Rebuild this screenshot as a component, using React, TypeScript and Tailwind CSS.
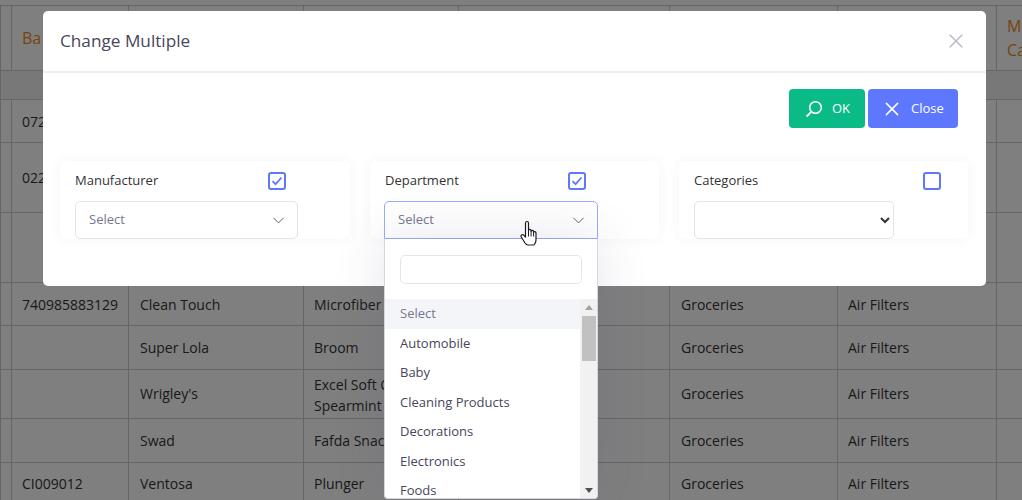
import React from 'react';
import { ChevronDown, X } from 'lucide-react';

const rows = [
  { h: 'h-[43px]', a: '072', b: '', c: '', pad: '', cc: '' },
  { h: 'h-[70px]', a: '022', b: '', c: '', pad: '', cc: '' },
  { h: 'h-[70px]', a: '', b: '', c: '', pad: '', cc: '' },
  { h: 'h-[43px]', a: '740985883129', b: 'Clean Touch', c: 'Microfiber', pad: '', cc: '' },
  { h: 'h-[44px]', a: '', b: 'Super Lola', c: 'Broom', pad: '', cc: '' },
  { h: 'h-[49px]', a: '', b: "Wrigley's", c: 'Excel Soft C Spearmint', pad: 'pb-[2px]', cc: 'pt-[2px]' },
  { h: 'h-[44px]', a: '', b: 'Swad', c: 'Fafda Snac', pad: '', cc: '' },
  { h: 'h-[42px]', a: 'CI009012', b: 'Ventosa', c: 'Plunger', pad: '', cc: '' },
];

const options = ['Automobile', 'Baby', 'Cleaning Products', 'Decorations', 'Electronics', 'Foods'];

function Check({ checked }: { checked: boolean }) {
  return (
    <span className="flex h-[18px] w-[18px] items-center justify-center rounded-[3px] border-2 border-[#5d78ff] bg-white">
      {checked && (
        <svg width="12" height="10" viewBox="0 0 12 10" fill="none">
          <path d="M1.5 5.2 4.6 8.2 10.5 1.5" stroke="#5d78ff" strokeWidth="1.8" />
        </svg>
      )}
    </span>
  );
}

function FakeSelect({ open }: { open?: boolean }) {
  return (
    <div className={`flex h-[38px] items-center justify-between rounded-[5px] border pl-[13px] text-[13px] text-[#74788d] ${open ? 'w-[214px] rounded-b-none border-[#9aabff] pr-[9px]' : 'w-[223px] border-[#e2e5ec] pr-[9px]'}`}>
      <span>Select</span>
      <ChevronDown size={19} strokeWidth={1.25} className="text-[#595d6e]" />
    </div>
  );
}

function HandCursor() {
  return (
    <svg className="absolute left-[520px] top-[220px]" width="20" height="27" viewBox="0 0 20 27">
      <path
        d="M5.5 3c0-2 3-2 3 0v7.5c0-1.5 2.6-1.5 2.6 0v1c0-1.4 2.5-1.4 2.5 0v1c0-1.3 2.4-1.3 2.4.2v7c0 2.6-1.6 5.3-2.4 5.3H8c-1.5 0-2.2-.8-3-2L1.3 17c-1-1.8 1-3.3 2.4-1.8l1.8 2z"
        fill="#fff"
        stroke="#1b1b28"
        strokeWidth="1.2"
        strokeLinejoin="round"
      />
      <path d="M8.5 11v5.5M11.1 11.5v5M13.6 12.5v4" stroke="#1b1b28" strokeWidth="1" fill="none" />
    </svg>
  );
}

function Dropdown() {
  return (
    <div className="absolute left-[384px] top-[239px] h-[260px] w-[214px] overflow-hidden rounded-b-[4px] border border-t-0 border-[#d5d5dc] bg-white shadow-[0_0_50px_0_rgba(82,63,105,0.15)]">
      <div className="flex h-[60px] items-start px-[15px] pt-[16px]">
        <div className="h-[29px] w-full rounded-[5px] border border-[#e2e5ec]" />
      </div>
      <div className="flex">
        <div className="w-[196px] text-[13px] text-[#48465b]">
          <div className="flex h-[29.6px] items-center bg-[#f4f5f8] pl-[15px] text-[#74788d]">Select</div>
          {options.map((o) => (
            <div key={o} className="flex h-[29.5px] items-center pl-[15px]">{o}</div>
          ))}
        </div>
        <div className="flex h-[200px] w-[17px] flex-col items-center justify-between bg-[#f1f1f1] py-[6px]">
          <svg width="8" height="5" viewBox="0 0 8 5"><path d="M4 0 8 5H0z" fill="#a3a3a3" /></svg>
          <svg width="8" height="5" viewBox="0 0 8 5"><path d="M4 5 8 0H0z" fill="#505050" /></svg>
        </div>
      </div>
      <div className="absolute left-[197px] top-[77px] h-[45px] w-[14px] bg-[#c1c1c1]" />
    </div>
  );
}

export default function App() {
  return (
    <div className="relative h-[500px] w-[1022px] overflow-hidden bg-white font-['Open_Sans',sans-serif] text-[14px] text-[#333]">
      {/* Table behind the modal */}
      <div className="pt-[5px]">
        <table className="w-[1100px] table-fixed border-collapse">
          <colgroup>
            <col className="w-[11px]" />
            <col className="w-[117px]" />
            <col className="w-[175px]" />
            <col className="w-[155px]" />
            <col className="w-[211px]" />
            <col className="w-[168px]" />
            <col className="w-[159px]" />
            <col className="w-[104px]" />
          </colgroup>
          <thead>
            <tr className="h-[65px] text-left text-[16px] leading-[24px] text-[#e88a20]">
              <th className="border border-[#ccc]" />
              <th className="border border-[#ccc] px-[10px] font-normal">Ba</th>
              <th className="border border-[#ccc]" />
              <th className="border border-[#ccc]" />
              <th className="border border-[#ccc]" />
              <th className="border border-[#ccc]" />
              <th className="border border-[#ccc]" />
              <th className="border border-[#ccc] px-[10px] font-normal">M<br />Ca</th>
            </tr>
          </thead>
          <tbody>
            <tr className="h-[29px]">
              <td colSpan={8} className="border border-[#ccc] bg-[#f0f0f0]" />
            </tr>
            {rows.map((r, i) => (
              <tr key={i} className={r.h}>
                <td className="border border-[#ccc]" />
                <td className={`border border-[#ccc] px-[10px] ${r.pad}`}>{r.a}</td>
                <td className={`border border-[#ccc] px-[11px] ${r.pad}`}>{r.b}</td>
                <td className={`border border-[#ccc] px-[10px] leading-[21px] ${r.cc}`}>{r.c}</td>
                <td className="border border-[#ccc] px-3" />
                <td className={`border border-[#ccc] px-[11px] ${r.pad}`}>{i > 2 && 'Groceries'}</td>
                <td className={`border border-[#ccc] px-[10px] ${r.pad}`}>{i > 2 && 'Air Filters'}</td>
                <td className="border border-[#ccc]" />
              </tr>
            ))}
          </tbody>
        </table>
      </div>

      {/* Backdrop */}
      <div className="absolute inset-0 bg-black/50" />

      {/* Modal */}
      <div className="absolute left-[43px] top-[11px] h-[275px] w-[943px] rounded-[5px] bg-white">
        <div className="flex h-[62px] items-center justify-between border-b-2 border-[#eeeef4] pl-[17px] pr-[18px]">
          <h5 className="text-[17.2px] text-[#48465b]">Change Multiple</h5>
          <X size={24} strokeWidth={1.5} className="text-[#b9bcc8]" />
        </div>
        <div className="px-[17px] pt-[16px]">
          <div className="flex justify-end gap-[3px] pr-[11px] text-[13px] text-white">
            <button className="flex h-[39px] w-[76px] items-center gap-[9px] rounded-[4px] bg-[#0abb87] pl-[16px]">
              <svg width="18" height="18" viewBox="0 0 18 18" fill="none" stroke="#fff">
                <circle cx="10.5" cy="7.5" r="5.8" strokeWidth="1.5" />
                <path d="M6.2 11.8 1.5 16.5" strokeWidth="1.8" />
              </svg>
              OK
            </button>
            <button className="flex h-[39px] w-[90px] items-center gap-[10px] rounded-[4px] bg-[#5d78ff] pl-[15px]">
              <X size={18} strokeWidth={1.6} className="h-[18px] w-[18px] scale-125" />
              <span>Close</span>
            </button>
          </div>
          <div className="mt-[33px] flex">
            <div className="h-[78px] w-[290px] rounded-[5px] bg-white pl-[15px] pt-[11px] shadow-[0_0_13px_0_rgba(82,63,105,0.05)]">
              <div className="flex h-[18px] w-[211px] items-center justify-between text-[13px] text-[#333]">
                <span>Manufacturer</span>
                <Check checked />
              </div>
              <div className="mt-[11px]"><FakeSelect /></div>
            </div>
            <div className="ml-[20px] h-[78px] w-[289px] rounded-[5px] bg-white pl-[14px] pt-[11px] shadow-[0_0_13px_0_rgba(82,63,105,0.05)]">
              <div className="ml-[1px] flex h-[18px] w-[201px] items-center justify-between text-[13px] text-[#333]">
                <span>Department</span>
                <Check checked />
              </div>
              <div className="mt-[11px]"><FakeSelect open /></div>
            </div>
            <div className="ml-[20px] h-[78px] w-[289px] rounded-[5px] bg-white pl-[15px] pt-[11px] shadow-[0_0_13px_0_rgba(82,63,105,0.05)]">
              <div className="flex h-[18px] w-[247px] items-center justify-between text-[13px] text-[#333]">
                <span>Categories</span>
                <Check checked={false} />
              </div>
              <select className="mt-[11px] block h-[38px] w-[200px] rounded-[5px] border border-[#e2e5ec] bg-white text-[13px]" />
            </div>
          </div>
        </div>
      </div>

      <Dropdown />
      <HandCursor />
    </div>
  );
}
